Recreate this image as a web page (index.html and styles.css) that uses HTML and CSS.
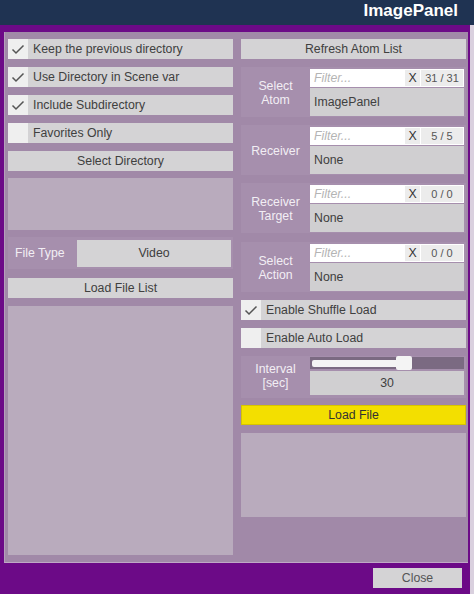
FILE: index.html
```html
<!DOCTYPE html>
<html>
<head>
<meta charset="utf-8">
<link rel="stylesheet" href="styles.css">
</head>
<body>
<div class="header"><span class="title">ImagePanel</span></div>
<div class="frame">
  <div class="panel">
    <div class="col">
      <div class="toggle"><span class="box"><svg width="20" height="20" viewBox="0 0 20 20"><polyline points="4.5,10.5 8,14 15.5,6.5" fill="none" stroke="#555" stroke-width="1.5"/></svg></span><span class="tlabel">Keep the previous directory</span></div>
      <div class="toggle mt8"><span class="box"><svg width="20" height="20" viewBox="0 0 20 20"><polyline points="4.5,10.5 8,14 15.5,6.5" fill="none" stroke="#555" stroke-width="1.5"/></svg></span><span class="tlabel">Use Directory in Scene var</span></div>
      <div class="toggle mt8"><span class="box"><svg width="20" height="20" viewBox="0 0 20 20"><polyline points="4.5,10.5 8,14 15.5,6.5" fill="none" stroke="#555" stroke-width="1.5"/></svg></span><span class="tlabel">Include Subdirectory</span></div>
      <div class="toggle mt8"><span class="box"></span><span class="tlabel">Favorites Only</span></div>
      <div class="btn mt8">Select Directory</div>
      <div class="empty e-dir"></div>
      <div class="ftype"><span class="flabel">File Type</span><div class="btn video">Video</div></div>
      <div class="btn mt9">Load File List</div>
      <div class="empty e-list"></div>
    </div>
    <div class="col">
      <div class="btn">Refresh Atom List</div>
      <div class="group mt8">
        <div class="glabel">Select<br>Atom</div>
        <div class="gctl">
          <div class="filter"><span class="ph">Filter...</span><span class="xbtn">X</span><span class="cnt">31 / 31</span></div>
          <div class="dd">ImagePanel</div>
        </div>
      </div>
      <div class="group mt8">
        <div class="glabel">Receiver</div>
        <div class="gctl">
          <div class="filter"><span class="ph">Filter...</span><span class="xbtn">X</span><span class="cnt">5 / 5</span></div>
          <div class="dd">None</div>
        </div>
      </div>
      <div class="group mt8">
        <div class="glabel">Receiver<br>Target</div>
        <div class="gctl">
          <div class="filter"><span class="ph">Filter...</span><span class="xbtn">X</span><span class="cnt">0 / 0</span></div>
          <div class="dd">None</div>
        </div>
      </div>
      <div class="group mt9">
        <div class="glabel">Select<br>Action</div>
        <div class="gctl">
          <div class="filter"><span class="ph">Filter...</span><span class="xbtn">X</span><span class="cnt">0 / 0</span></div>
          <div class="dd">None</div>
        </div>
      </div>
      <div class="toggle mt8"><span class="box"><svg width="20" height="20" viewBox="0 0 20 20"><polyline points="4.5,10.5 8,14 15.5,6.5" fill="none" stroke="#555" stroke-width="1.5"/></svg></span><span class="tlabel">Enable Shuffle Load</span></div>
      <div class="toggle mt8"><span class="box"></span><span class="tlabel">Enable Auto Load</span></div>
      <div class="group interval mt8">
        <div class="glabel">Interval<br>[sec]</div>
        <div class="gctl">
          <div class="slider"><div class="fill"></div><div class="handle"></div></div>
          <div class="value">30</div>
        </div>
      </div>
      <div class="btn load mt7">Load File</div>
      <div class="empty e-load"></div>
    </div>
  </div>
  <div class="footer"><div class="btn close">Close</div></div>
</div>
</body>
</html>
```
FILE: styles.css
```css
* { box-sizing: border-box; }
html, body { margin: 0; padding: 0; }
body {
  width: 474px;
  height: 594px;
  overflow: hidden;
  background: #d9d0de;
  font-family: "Liberation Sans", Arial, sans-serif;
  font-size: 12.3px;
  color: #404040;
}
.header {
  height: 25px;
  background: #1f3352;
  display: flex;
  justify-content: flex-end;
  align-items: center;
  padding-right: 16px;
}
.title {
  color: #ffffff;
  font-weight: bold;
  font-size: 17px;
  line-height: 20px;
  margin-top: -3px;
}
.frame {
  width: 470px;
  height: 569px;
  background: #6c0a87;
  padding: 7px 0 0 4px;
}
.panel {
  width: 464px;
  height: 531px;
  background: #a189a8;
  border-left: 1px solid #b59fbb;
  border-bottom: 1px solid #c0a8c6;
  padding: 7px 1px 0 3px;
  display: flex;
  gap: 8px;
}
.col {
  width: 225px;
  display: flex;
  flex-direction: column;
}
.mt7 { margin-top: 7px; }
.mt8 { margin-top: 8px; }
.mt9 { margin-top: 9px; }
.toggle {
  height: 20px;
  display: flex;
}
.box {
  width: 20px;
  height: 20px;
  background: #efefef;
  display: block;
}
.box svg { display: block; }
.tlabel {
  flex: 1;
  background: #d4d3d5;
  padding-left: 5px;
  line-height: 20px;
  white-space: nowrap;
}
.btn {
  height: 20px;
  background: #d4d3d5;
  text-align: center;
  line-height: 20px;
  white-space: nowrap;
}
.empty { background: #b9abbd; }
.e-dir { margin-top: 7px; height: 52px; }
.e-list { margin-top: 8px; height: 249px; }
.e-load { margin-top: 8px; height: 84px; }
.ftype {
  margin-top: 7px;
  height: 32px;
  background: #a68fad;
  display: flex;
  align-items: center;
  padding: 0 2px 0 7px;
}
.flabel {
  width: 62px;
  color: #f2eef4;
}
.btn.video {
  flex: 1;
  height: 27px;
  line-height: 27px;
}
.group {
  height: 50px;
  background: #a68fad;
  display: flex;
  padding: 2px 2px 1px 0;
}
.glabel {
  width: 69px;
  color: #f2eef4;
  text-align: center;
  line-height: 14px;
  align-self: center;
}
.gctl {
  flex: 1;
  display: flex;
  flex-direction: column;
  gap: 1px;
}
.filter {
  height: 18px;
  background: #ffffff;
  display: flex;
  align-items: center;
  padding: 0 1px 0 4px;
}
.ph {
  flex: 1;
  color: #b4b4b4;
  font-style: italic;
}
.xbtn {
  width: 15px;
  height: 16px;
  background: #ececec;
  text-align: center;
  line-height: 16px;
  color: #333;
  margin-right: 1px;
}
.cnt {
  width: 42px;
  height: 16px;
  background: #ececec;
  text-align: center;
  line-height: 16px;
  font-size: 11px;
  color: #555;
}
.dd {
  flex: 1;
  background: #d0cfd1;
  padding-left: 4px;
  display: flex;
  align-items: center;
}
.group.interval {
  height: 42px;
  padding: 1px 2px 3px 0;
}
.slider {
  position: relative;
  height: 12px;
  background: #7b6a82;
  margin-bottom: 1px;
}
.fill {
  position: absolute;
  left: 2px;
  top: 3px;
  width: 92px;
  height: 7px;
  background: #f4f4f4;
  border-radius: 2px;
}
.handle {
  position: absolute;
  left: 86px;
  top: -1px;
  width: 16px;
  height: 14px;
  background: #f4f4f4;
  border-radius: 2px;
}
.value {
  flex: 1;
  background: #d0cfd1;
  display: flex;
  align-items: center;
  justify-content: center;
}
.btn.load {
  background: #f3df00;
  color: #333;
  box-shadow: inset 0 0 0 1px #d6c400;
}
.footer {
  display: flex;
  justify-content: flex-end;
  padding: 5px 8px 0 0;
}
.btn.close {
  width: 89px;
  color: #555;
}
```
